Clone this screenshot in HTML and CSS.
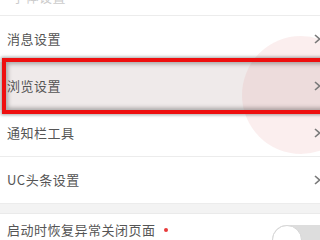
FILE: index.html
```html
<!DOCTYPE html>
<html lang="zh">
<head>
<meta charset="utf-8">
<link rel="stylesheet" href="styles.css">
</head>
<body>
<div class="screen">
  <div class="list">
    <div class="row row-top"><span class="label">字体设置</span></div>
    <div class="row"><span class="label">消息设置</span><svg class="chev" width="7" height="10" viewBox="0 0 7 10"><path d="M1 1 L5.5 5 L1 9" fill="none" stroke="#7a7a7a" stroke-width="1.6"/></svg></div>
    <div class="row row-pressed"><span class="label">浏览设置</span><svg class="chev" width="7" height="10" viewBox="0 0 7 10"><path d="M1 1 L5.5 5 L1 9" fill="none" stroke="#7a7a7a" stroke-width="1.6"/></svg></div>
    <div class="row"><span class="label">通知栏工具</span><svg class="chev" width="7" height="10" viewBox="0 0 7 10"><path d="M1 1 L5.5 5 L1 9" fill="none" stroke="#7a7a7a" stroke-width="1.6"/></svg></div>
    <div class="row"><span class="label">UC头条设置</span><svg class="chev" width="7" height="10" viewBox="0 0 7 10"><path d="M1 1 L5.5 5 L1 9" fill="none" stroke="#7a7a7a" stroke-width="1.6"/></svg></div>
  </div>
  <div class="gap"></div>
  <div class="list">
    <div class="row row-switch"><span class="label">启动时恢复异常关闭页面</span><span class="dot"></span><span class="switch"><span class="knob"></span></span></div>
  </div>
  <div class="ripple"></div>
  <div class="highlight"></div>
</div>
</body>
</html>
```
FILE: styles.css
```css
html, body {
  margin: 0;
  padding: 0;
  background: #ffffff;
}
.screen {
  position: relative;
  width: 320px;
  height: 240px;
  overflow: hidden;
  font-family: "Noto Sans CJK SC", "Noto Sans", sans-serif;
  color: #555555;
}
.list {
  display: flex;
  flex-direction: column;
  background: #ffffff;
}
.row {
  display: flex;
  align-items: center;
  height: 46px;
  padding: 0 0 0 7px;
  border-bottom: 1px solid #ececec;
  font-size: 13px;
  letter-spacing: 0.5px;
  position: relative;
}
.row-top {
  height: 15px;
  align-items: flex-end;
  overflow: hidden;
}
.row-top .label {
  margin-bottom: 9px;
  margin-left: 5px;
  color: #cccccc;
}
.row-pressed {
  background: #efeaea;
}
.label {
  flex: 1;
  line-height: 18px;
}
.chev {
  flex: none;
  margin-right: -1px;
  position: relative;
  z-index: 2;
}
.gap {
  height: 9px;
  background: #f3f3f3;
  border-bottom: 1px solid #eaeaea;
}
.row-switch {
  border-bottom: none;
  align-items: flex-start;
  height: 30px;
  padding-top: 7px;
}
.row-switch .label {
  flex: none;
}
.dot {
  width: 4px;
  height: 4px;
  border-radius: 50%;
  background: #e83a3a;
  margin-left: 8px;
  margin-top: 7px;
}
.switch {
  margin-left: auto;
  margin-right: -20px;
  width: 68px;
  height: 30px;
  border-radius: 15px;
  background: #dddddd;
  margin-top: 4px;
  position: relative;
}
.knob {
  position: absolute;
  left: 0;
  top: 0;
  width: 28px;
  height: 28px;
  border-radius: 50%;
  background: #ffffff;
  border: 1px solid #d6d6d6;
}
.ripple {
  position: absolute;
  left: 242px;
  top: 36px;
  width: 118px;
  height: 118px;
  border-radius: 50%;
  background: rgba(232, 150, 150, 0.16);
  pointer-events: none;
}
.highlight {
  position: absolute;
  left: 2px;
  top: 58px;
  width: 330px;
  height: 48px;
  border: 4px solid #ee0f0f;
  box-shadow: 0 0 3px 1px rgba(0,0,0,0.35), inset 0 0 4px 2px rgba(0,0,0,0.3);
  pointer-events: none;
}
```
